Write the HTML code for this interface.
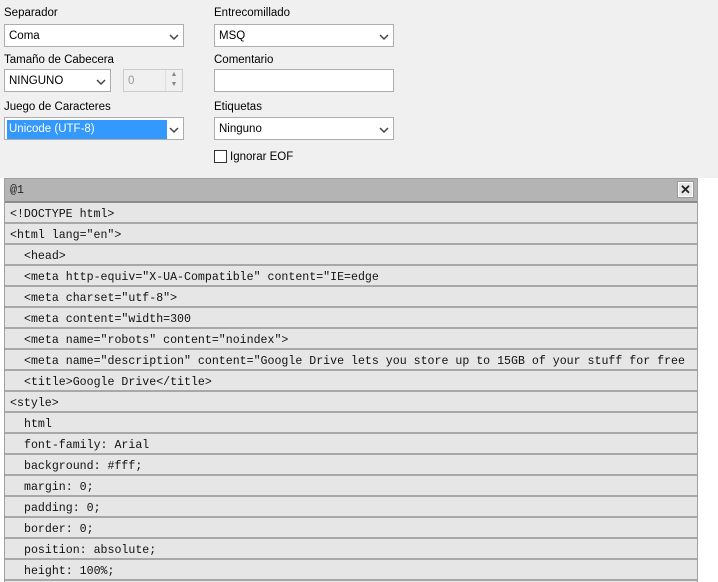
<!DOCTYPE html>
<html><head><style>
*{margin:0;padding:0;box-sizing:border-box}
body{width:718px;height:582px;background:#fff;position:relative;overflow:hidden;font-family:"Liberation Sans",sans-serif;font-size:12px;color:#000}
#top{position:absolute;left:0;top:0;width:718px;height:178px;background:#f0f0f0}
.l{position:absolute;font-size:11.5px}
.s{position:absolute;background:#fff;border:1px solid #adadad;height:23px;font-size:11.5px;line-height:23px;padding-left:4px}
.s .a{position:absolute;right:4px;top:1px;width:10px;height:21px}
#grid{position:absolute;left:4px;top:178px;width:694px;height:404px;background:#e6e6e6;border-left:1px solid #a0a0a0;border-right:1px solid #a0a0a0;border-top:1px solid #a0a0a0}
#hdr{height:24px;background:#b4b4b4;border-bottom:2px solid #8c8c8c;font-family:"Liberation Mono",monospace;font-size:11.6px;line-height:22px;padding-left:5px;padding-top:1px;position:relative;color:#222}
.r{height:21px;border-bottom:2px solid #a8a8a8;font-family:"Liberation Mono",monospace;font-size:11.6px;line-height:17px;padding-top:3px;padding-left:5px;white-space:pre;overflow:hidden;color:#111}
.r.i{padding-left:19px}
</style></head><body>
<div id="top">
<div class="l" style="left:4px;top:7px">Separador</div>
<div class="s" style="left:4px;top:24px;width:180px">Coma<svg class="a" viewBox="0 0 10 21"><path d="M1 9l4 4 4-4" stroke="#444" stroke-width="1.5" fill="none"/></svg></div>
<div class="l" style="left:4px;top:54px">Tamaño de Cabecera</div>
<div class="s" style="left:4px;top:69px;width:107px">NINGUNO<svg class="a" viewBox="0 0 10 21"><path d="M1 9l4 4 4-4" stroke="#444" stroke-width="1.5" fill="none"/></svg></div>
<div class="s" style="left:123px;top:69px;width:60px;background:#f0f0f0;border-color:#ccc;color:#999">0<div style="position:absolute;right:0;top:0;width:17px;height:21px;border-left:1px solid #ddd;font-size:7px;line-height:10px;text-align:center;color:#888">▲<br>▼</div></div>
<div class="l" style="left:4px;top:101px">Juego de Caracteres</div>
<div class="s" style="left:4px;top:117px;width:180px;padding:2px"><div style="background:#3399ff;color:#fff;width:160px;height:19px;line-height:19px;padding-left:2px">Unicode (UTF-8)</div><svg class="a" viewBox="0 0 10 21"><path d="M1 9l4 4 4-4" stroke="#444" stroke-width="1.5" fill="none"/></svg></div>
<div class="l" style="left:214px;top:7px">Entrecomillado</div>
<div class="s" style="left:214px;top:24px;width:180px">MSQ<svg class="a" viewBox="0 0 10 21"><path d="M1 9l4 4 4-4" stroke="#444" stroke-width="1.5" fill="none"/></svg></div>
<div class="l" style="left:214px;top:54px">Comentario</div>
<div class="s" style="left:214px;top:69px;width:180px"></div>
<div class="l" style="left:214px;top:101px">Etiquetas</div>
<div class="s" style="left:214px;top:117px;width:180px">Ninguno<svg class="a" viewBox="0 0 10 21"><path d="M1 9l4 4 4-4" stroke="#444" stroke-width="1.5" fill="none"/></svg></div>
<div style="position:absolute;left:214px;top:150px;width:13px;height:13px;background:#fff;border:1px solid #333"></div>
<div class="l" style="left:230px;top:151px">Ignorar EOF</div>
</div>
<div id="grid">
<div id="hdr">@1<div style="position:absolute;right:4px;top:3px;width:15px;height:15px;background:#e8e8e8;border:1px solid #fff;outline:1px solid #999;font-size:13px;line-height:13px;text-align:center;font-family:'Liberation Sans',sans-serif;font-weight:bold">✕</div></div>
<div class="r">&lt;!DOCTYPE html&gt;</div>
<div class="r">&lt;html lang="en"&gt;</div>
<div class="r i">&lt;head&gt;</div>
<div class="r i">&lt;meta http-equiv="X-UA-Compatible" content="IE=edge</div>
<div class="r i">&lt;meta charset="utf-8"&gt;</div>
<div class="r i">&lt;meta content="width=300</div>
<div class="r i">&lt;meta name="robots" content="noindex"&gt;</div>
<div class="r i">&lt;meta name="description" content="Google Drive lets you store up to 15GB of your stuff for free</div>
<div class="r i">&lt;title&gt;Google Drive&lt;/title&gt;</div>
<div class="r">&lt;style&gt;</div>
<div class="r i">html</div>
<div class="r i">font-family: Arial</div>
<div class="r i">background: #fff;</div>
<div class="r i">margin: 0;</div>
<div class="r i">padding: 0;</div>
<div class="r i">border: 0;</div>
<div class="r i">position: absolute;</div>
<div class="r i">height: 100%;</div>
</div>
</body></html>
